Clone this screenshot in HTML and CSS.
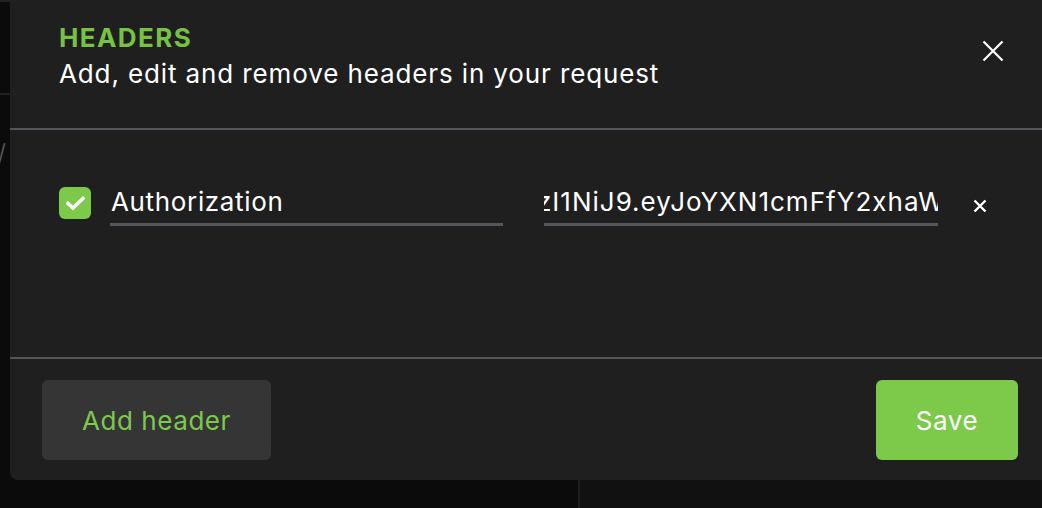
FILE: index.html
```html
<!DOCTYPE html>
<html lang="en">
<head>
<meta charset="utf-8">
<title>Headers</title>
<link rel="stylesheet" href="styles.css">
</head>
<body>
<div class="backdrop">
  <div class="bg-left">
    <div class="bg-topbar"></div>
    <div class="bg-slash">/</div>
  </div>
  <div class="bg-right"></div>
</div>

<div class="modal">
  <div class="modal-header">
    <div class="titles">
      <div class="title">HEADERS</div>
      <div class="subtitle">Add, edit and remove headers in your request</div>
    </div>
    <button class="close" aria-label="Close">
      <svg width="22" height="22" viewBox="0 0 22 22"><path d="M1.5 1.5 L20.5 20.5 M20.5 1.5 L1.5 20.5" stroke="#ffffff" stroke-width="2.2" fill="none"/></svg>
    </button>
  </div>
  <div class="modal-body">
    <div class="header-row">
      <div class="checkbox">
        <svg width="19" height="15" viewBox="0 0 19 15"><path d="M2 7.5 L7 12 L17 2.5" stroke="#ffffff" stroke-width="3.6" fill="none" stroke-linecap="square"/></svg>
      </div>
      <div class="field key">Authorization</div>
      <div class="field value"><span class="scrolled">zI1NiJ9.eyJoYXN1cmFfY2xhaW1zIjp7</span></div>
      <button class="remove" aria-label="Remove">
        <svg width="14" height="14" viewBox="0 0 14 14"><path d="M1.5 1.5 L12.5 12.5 M12.5 1.5 L1.5 12.5" stroke="#ffffff" stroke-width="2.4" fill="none"/></svg>
      </button>
    </div>
  </div>
  <div class="modal-footer">
    <button class="btn btn-add">Add header</button>
    <button class="btn btn-save">Save</button>
  </div>
</div>
</body>
</html>
```

FILE: styles.css
```css
* { box-sizing: border-box; }
html, body {
  margin: 0;
  padding: 0;
  width: 1042px;
  height: 508px;
  overflow: hidden;
  background: #0b0b0b;
  font-family: Inter, "Noto Sans", "Liberation Sans", sans-serif;
}
.backdrop {
  display: flex;
  height: 508px;
}
.bg-left {
  width: 578px;
  background: #0b0b0b;
  border-top: 2px solid #232323;
  position: relative;
}
.bg-topbar {
  height: 93px;
  border-bottom: 2px solid #1f1f1f;
}
.bg-slash {
  position: absolute;
  left: -3px;
  top: 136px;
  color: #5a5a5a;
  font-size: 26px;
  font-weight: 300;
}
.bg-right {
  flex: 1;
  background: #111111;
  border-left: 2px solid #1d1d1e;
}
.modal {
  position: absolute;
  left: 10px;
  top: 0;
  width: 1040px;
  height: 480px;
  background: #201f20;
  border-radius: 0 0 8px 8px;
  display: flex;
  flex-direction: column;
}
.modal-header {
  flex: none;
  height: 130px;
  display: flex;
  justify-content: space-between;
  align-items: flex-start;
  padding: 21px 46px 0 49px;
  border-bottom: 2px solid #55565b;
}
.title {
  color: #76c243;
  font-weight: 700;
  font-size: 26px;
  line-height: 34px;
  letter-spacing: 1.4px;
}
.subtitle {
  color: #ffffff;
  font-size: 26px;
  line-height: 36px;
  letter-spacing: 0.88px;
  margin-top: 1px;
}
.close {
  background: none;
  border: 0;
  padding: 0;
  margin-top: 19px;
  width: 22px;
  height: 22px;
  display: flex;
}
.modal-body {
  flex: none;
  height: 229px;
  padding: 50px 63px 0 49px;
  border-bottom: 2px solid #55565b;
}
.header-row {
  display: flex;
  align-items: center;
}
.checkbox {
  width: 32px;
  height: 32px;
  border-radius: 6px;
  background: #7dc94a;
  display: flex;
  align-items: center;
  justify-content: center;
  margin-right: 19px;
}
.field {
  height: 46px;
  border-bottom: 3px solid #55575c;
  color: #ffffff;
  font-size: 26px;
  line-height: 43px;
  letter-spacing: 0.65px;
  white-space: nowrap;
  overflow: hidden;
}
.key {
  width: 393px;
  padding-left: 1px;
}
.value {
  width: 394px;
  margin-left: 41px;
  letter-spacing: 1px;
}
.scrolled {
  display: inline-block;
  margin-left: -7px;
}
.remove {
  margin-left: 35px;
  margin-top: 5px;
  background: none;
  border: 0;
  padding: 0;
  width: 14px;
  height: 14px;
  display: flex;
}
.modal-footer {
  display: flex;
  justify-content: space-between;
  padding: 21px 32px 0 32px;
}
.btn {
  height: 80px;
  border: 0;
  border-radius: 6px;
  font-family: Inter, "Noto Sans", "Liberation Sans", sans-serif;
  font-size: 26px;
  letter-spacing: 0.55px;
}
.btn-add {
  width: 229px;
  background: #363536;
  color: #7dc94a;
}
.btn-save {
  width: 142px;
  background: #7dc94a;
  color: #ffffff;
}
```
